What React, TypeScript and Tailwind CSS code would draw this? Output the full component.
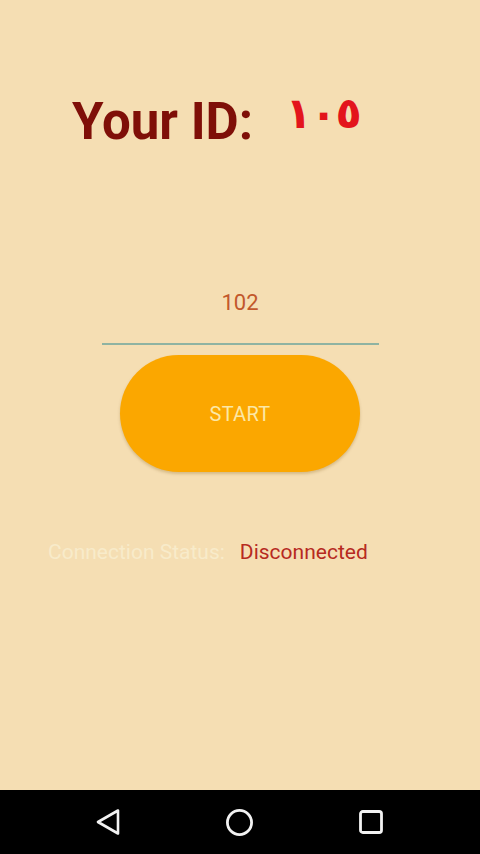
import { Circle, Square } from 'lucide-react';

const ID_DIGITS = ['١', '٠', '٥'];

// Android-style "Your ID" screen with the system navigation bar at the bottom.
function NavBar() {
  return (
    <div className="flex h-[64px] shrink-0 items-center justify-between bg-black pl-[95px] pr-[95px]">
      <svg width="26" height="28" viewBox="0 0 26 28" fill="none" aria-hidden>
        <path
          d="M23 2.5 L3 14 L23 25.5 Z"
          stroke="#f2f2f2"
          strokeWidth="2.6"
          strokeLinejoin="round"
        />
      </svg>
      <Circle size={29} strokeWidth={2.3} color="#f2f2f2" aria-hidden />
      <Square size={28} strokeWidth={2.4} color="#f2f2f2" aria-hidden />
    </div>
  );
}

export default function App() {
  return (
    <div
      className="flex h-[854px] w-[480px] flex-col overflow-hidden bg-[#f5deb3]"
      style={{ fontFamily: 'Roboto, "Liberation Sans", sans-serif' }}
    >
      <main className="flex flex-1 flex-col">
        {/* id heading */}
        <div className="flex h-[50px] items-start pl-[72px] mt-[97px]">
          <span className="text-[51px] font-bold leading-[50px] text-[#7f0f08]">Your ID:</span>
          <span
            className="ml-[33px] flex text-[43px] font-bold leading-[32px] text-[#e3141c]"
            style={{ fontFamily: '"DejaVu Sans", sans-serif' }}
          >
            {ID_DIGITS.map((d, i) => (
              <span key={i} className="flex w-[25px] justify-center">
                {d}
              </span>
            ))}
          </span>
        </div>

        {/* peer id input */}
        <div className="mx-auto mt-[141px] w-[277px]">
          <div className="pb-[25px] text-center text-[22px] leading-[30px] text-[#c2582b]">102</div>
          <div className="h-[2px] bg-[#8fb3a2]" />
        </div>

        <button
          type="button"
          className="mx-auto mt-[10px] flex h-[117px] w-[240px] items-center justify-center rounded-full bg-[#fba700] text-[20px] tracking-[0.3px] text-[#fbe8a6] shadow-[0_2px_3px_rgba(120,80,0,0.25)]"
        >
          START
        </button>

        {/* connection status */}
        <div className="mt-[67px] flex items-center pl-[48px] text-[21px] leading-[26px]">
          <span className="text-[#f8ebca]">Connection Status:</span>
          <span className="ml-[15px] text-[#b72a1f]">Disconnected</span>
        </div>
      </main>
      <NavBar />
    </div>
  );
}
